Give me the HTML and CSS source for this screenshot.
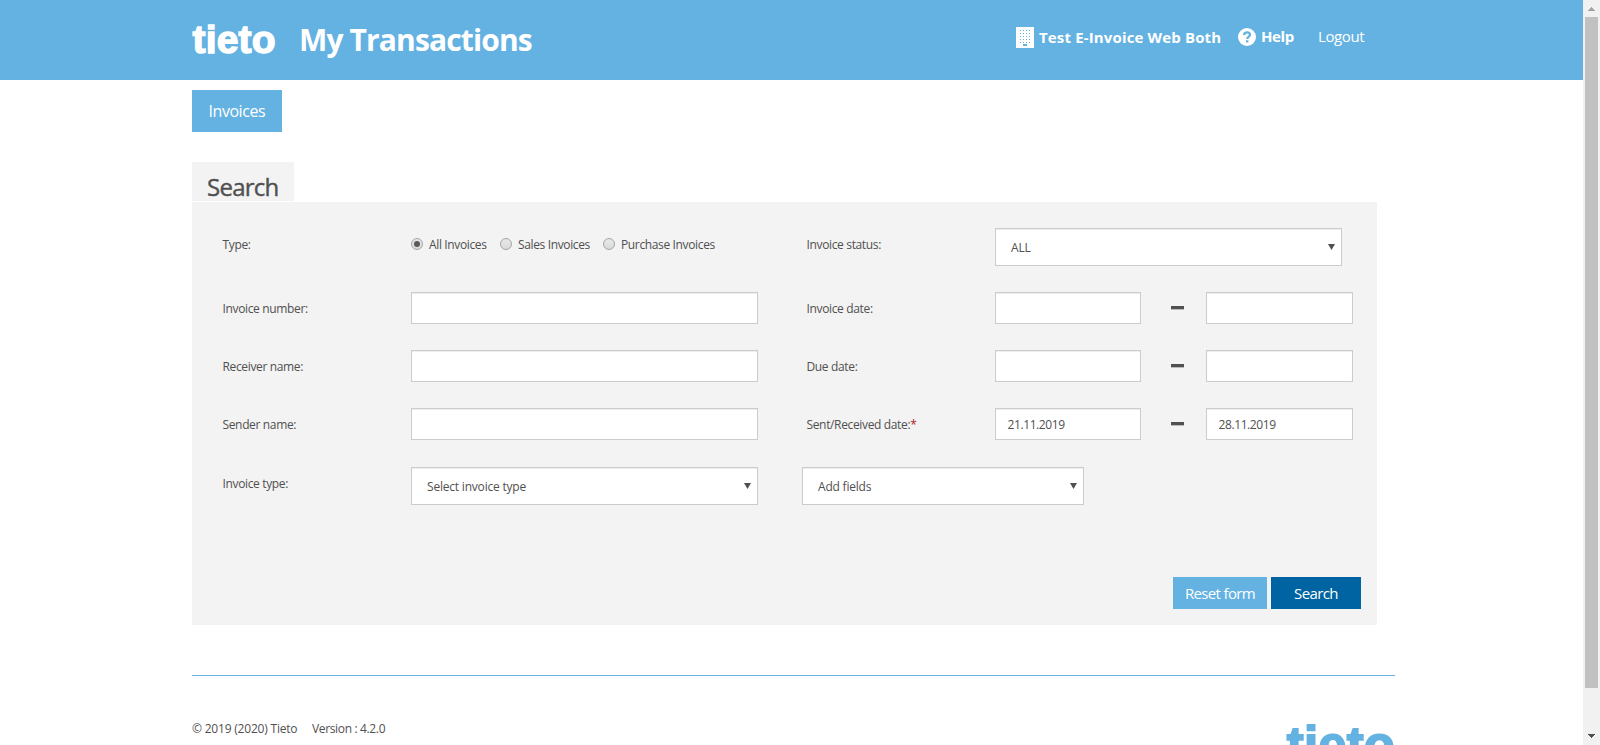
FILE: index.html
```html
<!DOCTYPE html>
<html lang="en">
<head>
<meta charset="utf-8">
<title>My Transactions</title>
<link rel="stylesheet" href="styles.css">
</head>
<body>
<div class="page">
  <header class="header">
    <div class="logo">tieto</div>
    <h1 class="title">My Transactions</h1>
    <div class="account">
      <svg class="building" width="18" height="21" viewBox="0 0 18 21">
        <path fill="#fff" d="M0 0h18v21H0z"/>
        <g stroke="#63b2e2" stroke-width="1" stroke-dasharray="1 2">
          <path d="M4 3.5h11M4 6.5h11M4 9.5h11M4 12.5h11M4 15.5h11"/>
        </g>
        <path fill="#63b2e2" d="M7 17h4v2H7z"/>
      </svg>
      <span class="account-name">Test E-Invoice Web Both</span>
    </div>
    <a class="help">
      <svg width="18" height="18" viewBox="0 0 18 18">
        <circle cx="9" cy="9" r="9" fill="#fff"/>
        <path d="M6 7c.2-2 1.400-2.700 3-2.700 1.800 0 3 1 3 2.500C12 8.900 9.200 8.900 9.200 11" fill="none" stroke="#63b2e2" stroke-width="2.300"/>
        <path fill="#63b2e2" d="M8 12.300h2.400v2.200H8z"/>
      </svg>
      <span>Help</span>
    </a>
    <a class="logout">Logout</a>
  </header>
  <main class="content">
    <nav class="nav"><a class="nav-item">Invoices</a></nav>
    <h2 class="search-tab"><span>Search</span></h2>
    <form class="panel">
      <div class="fields">
        <label class="label">Type:</label>
        <div class="radios">
          <label class="choice"><i class="radio checked"></i><span class="c1">All Invoices</span></label>
          <label class="choice"><i class="radio"></i><span class="c2">Sales Invoices</span></label>
          <label class="choice"><i class="radio"></i><span class="c3">Purchase Invoices</span></label>
        </div>
        <label class="label right">Invoice status:</label>
        <div class="select"><span>ALL</span><i class="arrow"></i></div>

        <label class="label">Invoice number:</label>
        <div class="input"></div>
        <label class="label right">Invoice date:</label>
        <div class="range"><div class="input"></div><i class="dash"></i><div class="input"></div></div>

        <label class="label">Receiver name:</label>
        <div class="input"></div>
        <label class="label right">Due date:</label>
        <div class="range"><div class="input"></div><i class="dash"></i><div class="input"></div></div>

        <label class="label">Sender name:</label>
        <div class="input"></div>
        <label class="label right">Sent/Received date:<b class="required">*</b></label>
        <div class="range"><div class="input">21.11.2019</div><i class="dash"></i><div class="input">28.11.2019</div></div>

        <label class="label last">Invoice type:</label>
        <div class="select last"><span>Select invoice type</span><i class="arrow"></i></div>
        <div class="select last add"><span>Add fields</span><i class="arrow"></i></div>
      </div>
      <div class="buttons">
        <a class="button reset">Reset form</a>
        <a class="button submit">Search</a>
      </div>
    </form>
    <footer class="footer">
      <div class="copyright"><span class="owner">© 2019 (2020) Tieto</span><span class="version">Version : 4.2.0</span></div>
      <div class="logo footer-logo">tieto</div>
    </footer>
  </main>
</div>
<div class="scrollbar">
  <svg width="17" height="17" viewBox="0 0 17 17"><path fill="#a3a3a3" d="M8 7h1v1h1v1h1v1h1v1H5v-1h1V9h1V8h1z"/></svg>
  <div class="thumb"></div>
  <svg class="down" width="17" height="17" viewBox="0 0 17 17"><path fill="#505050" d="M5 6h7v1h-1v1h-1v1H9v1H8V9H7V8H6V7H5z"/></svg>
</div>
</body>
</html>
```
FILE: styles.css
```css
* { box-sizing: border-box; }
html { overflow: hidden; }
body {
  margin: 0;
  height: 745px;
  display: flex;
  overflow: hidden;
  background: #fff;
  color: #505050;
  font: 12px/18px "Open Sans", "Noto Sans", sans-serif;
}
svg { display: block; flex: none; }
.page { width: 1583px; height: 745px; overflow: hidden; }
.header {
  height: 80px;
  padding-left: 192px;
  display: flex;
  align-items: flex-start;
  background: #63b2e2;
  color: #fff;
  white-space: nowrap;
}
.logo {
  font: 700 39px/46px "Liberation Sans", Arial, sans-serif;
  -webkit-text-stroke: 1.4px currentColor;
  letter-spacing: 0.2px;
}
.header .logo { width: 107px; padding: 17px 0 0 0.5px; }
.title {
  width: 717px;
  margin: 19px 0 0;
  font-size: 30px;
  line-height: 42px;
  font-weight: 700;
  letter-spacing: -0.87px;
}
.account { width: 222px; display: flex; gap: 5px; padding-top: 27px; font-size: 15px; line-height: 20px; font-weight: 700; letter-spacing: 0.15px; }
.help { width: 80px; display: flex; gap: 5px; padding-top: 28px; font-size: 15px; line-height: 17px; font-weight: 700; letter-spacing: -0.4px; }
.logout { padding-top: 28px; font-size: 15px; line-height: 17px; letter-spacing: -0.4px; }
.content { width: 1203px; margin-left: 192px; padding-top: 10px; }
.nav { display: flex; }
.nav-item { width: 90px; height: 42px; padding-left: 16.5px; background: #63b2e2; color: #fff; font-size: 16px; line-height: 43px; letter-spacing: -0.45px; }
.search-tab {
  width: 102px;
  height: 39px;
  margin: 30px 0 1px;
  padding-left: 15px;
  background: #f3f3f3;
  font-size: 24px;
  line-height: 50px;
  font-weight: 500;
  letter-spacing: -0.75px;
  -webkit-text-stroke: 0.4px currentColor;
}
.panel { width: 1185px; height: 423px; padding: 26px 16px 16px 30px; background: #f3f3f3; display: flex; flex-direction: column; justify-content: space-between; }
.fields { display: grid; grid-template-columns: 189px 347px 237px 358px; grid-template-rows: 38px 32px 32px 32px 38px; row-gap: 26px; align-items: center; white-space: nowrap; }
.label { padding: 1px 0 0 0.5px; letter-spacing: -0.35px; }
.label:first-child, .label:first-child ~ .label:nth-child(3) { padding-top: 0; padding-bottom: 5px; }
.fields .label.right { padding-left: 48.5px; }
.fields .label.last { padding-bottom: 3px; }
.required { color: #a22; font-weight: 400; }
.radios { display: flex; padding-bottom: 5px; gap: 12px; letter-spacing: -0.36px; }
.choice { display: flex; align-items: center; gap: 6px; }
.c1 { width: 59px; }
.c2 { width: 73px; }
.c3 { width: 95px; }
.radio { width: 12px; height: 12px; border: 1px solid #a6a6a6; border-radius: 50%; background: linear-gradient(#e8e8e8, #dadada); display: flex; margin-bottom: 1px; }
.radio.checked::after { content: ""; width: 6px; height: 6px; margin: 2px; border-radius: 50%; background: #5a5a5a; }
.input { height: 32px; padding-left: 11.5px; border: 1px solid #ccc; background: #fff; box-shadow: inset 0 1px 1px rgba(0,0,0,.075); line-height: 31px; letter-spacing: -0.4px; }
.range { display: grid; grid-template-columns: 146px 65px 147px; align-items: center; }
.dash { width: 13px; height: 4px; margin: 0 0 1px 30px; background: #505050; border-bottom: 1px solid #bbb; }
.select { width: 347px; height: 38px; padding: 0 6px 0 15px; border: 1px solid #ccc; background: #fff; box-shadow: inset 0 1px 1px rgba(0,0,0,.075); line-height: 36px; display: flex; align-items: center; justify-content: space-between; letter-spacing: -0.2px; }
.select span { padding-top: 2px; }
.select.last { margin-top: 2px; }
.add { width: 282px; margin-left: 44px; }
.arrow { width: 7px; height: 6px; background: #505050; clip-path: polygon(0 0, 100% 0, 50% 100%); }
.buttons { display: flex; justify-content: flex-end; gap: 4px; }
.button { height: 32px; color: #fff; font-size: 15px; line-height: 32px; text-align: center; white-space: nowrap; }
.reset { width: 94px; background: #63b2e2; letter-spacing: -0.65px; }
.submit { width: 90px; background: #0064a2; letter-spacing: -0.6px; }
.footer { margin-top: 50px; padding-top: 44px; border-top: 1px solid #63b2e2; height: 130px; display: flex; justify-content: space-between; }
.copyright { display: flex; white-space: nowrap; }
.owner { width: 120px; letter-spacing: -0.2px; }
.version { letter-spacing: -0.35px; }
.footer-logo { color: #63b2e2; font-size: 51px; line-height: 60px; letter-spacing: 0.1px; margin-top: -4px; -webkit-text-stroke-width: 1.8px; }
.scrollbar { width: 17px; height: 745px; background: #f1f1f1; display: flex; flex-direction: column; align-items: center; }
.thumb { width: 13px; height: 671px; background: #c1c1c1; }
.down { margin-top: 40px; }
```
